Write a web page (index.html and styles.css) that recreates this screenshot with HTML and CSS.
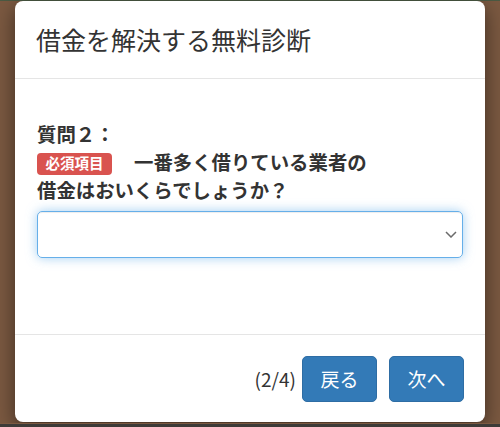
FILE: index.html
```html
<!DOCTYPE html>
<html lang="ja">
<head>
    <meta charset="UTF-8">
    <meta name="viewport" content="width=device-width, initial-scale=1.0">
    <title>借金を解決する無料診断</title>
    <link rel="stylesheet" href="styles.css">
</head>
<body>
    <div class="page-top"></div>
    <div class="modal">
        <div class="modal-header">
            <h4 class="modal-title">借金を解決する無料診断</h4>
        </div>
        <div class="modal-body">
            <p class="question">
                質問２：<br>
                <span class="label">必須項目</span>一番多く借りている業者の<br>
                借金はおいくらでしょうか？
            </p>
            <div class="select">
                <svg width="12" height="7" viewBox="0 0 12 7">
                    <polyline points="1,1 6,6 11,1" fill="none" stroke="#6b6b6b" stroke-width="1.5"/>
                </svg>
            </div>
        </div>
        <div class="modal-footer">
            <span class="step">(2/4)</span>
            <button class="btn">戻る</button>
            <button class="btn">次へ</button>
        </div>
    </div>
    <div class="page-bottom"></div>
</body>
</html>
```

FILE: styles.css
```css
body{
    margin: 0;
    padding: 0;
    height: 427px;
    overflow: hidden;
    background-color: #7b5941;
    font-family: "Noto Sans CJK JP", "Noto Sans", sans-serif;
    color: #333;
    display: flex;
    flex-direction: column;
}

.page-top{
    height: 1px;
    background-color: #4b5a43;
}

.modal{
    margin: 0 15px;
    background-color: #fff;
    border-radius: 8px;
    box-shadow: 0 6px 20px rgba(0, 0, 0, 0.5);
}

.modal-header{
    padding: 21px 21px;
    border-bottom: 1px solid #e5e5e5;
}

.modal-title{
    margin: 0;
    font-size: 25px;
    font-weight: 400;
    line-height: 35px;
}

.modal-body{
    padding: 21px 22px 76px;
}

.question{
    margin: 20px 0 8px;
    font-size: 19.4px;
    font-weight: 700;
    line-height: 27.8px;
}

.label{
    display: inline-block;
    background-color: #d9534f;
    color: #fff;
    font-size: 14.5px;
    font-weight: 700;
    line-height: 1;
    padding: 3px 8.5px 4.5px;
    border-radius: 4px;
    margin-right: 22px;
    vertical-align: 1px;
}

.select{
    height: 45px;
    border: 1px solid #66afe9;
    border-radius: 5px;
    box-shadow: inset 0 1px 1px rgba(0, 0, 0, 0.075), 0 0 11px rgba(102, 175, 233, 0.6);
    display: flex;
    align-items: center;
    justify-content: flex-end;
    padding-right: 5px;
}

.modal-footer{
    height: 88px;
    box-sizing: border-box;
    padding: 0 21px;
    border-top: 1px solid #e5e5e5;
    display: flex;
    justify-content: flex-end;
    align-items: center;
}

.step{
    font-size: 19px;
    margin-right: 6px;
}

.btn{
    width: 75px;
    height: 46px;
    background-color: #337ab7;
    border: 1px solid #2e6da4;
    border-radius: 5px;
    color: #fff;
    font-family: "Noto Sans CJK JP", "Noto Sans", sans-serif;
    font-size: 19px;
    padding: 0;
}

.btn + .btn{
    margin-left: 12px;
}

.page-bottom{
    flex: 1;
    margin-top: 1px;
    background: linear-gradient(#7b5941 0, #7b5941 1px, #3d3b38 1px);
}
```
